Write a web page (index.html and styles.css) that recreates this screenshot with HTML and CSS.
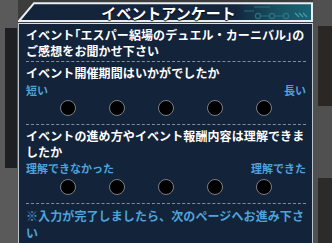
FILE: index.html
```html
<!DOCTYPE html>
<html lang="ja">
<head>
<meta charset="utf-8">
<title>イベントアンケート</title>
<link rel="stylesheet" href="styles.css">
</head>
<body>
<div class="stage">
  <div class="panel">
    <div class="header">
      <svg class="header-bg" width="295" height="20" viewBox="0 0 295 20">
        <defs>
          <linearGradient id="hg" x1="0" y1="0" x2="1" y2="0">
            <stop offset="0" stop-color="#13233a"/>
            <stop offset="0.74" stop-color="#13263d"/>
            <stop offset="0.88" stop-color="#18505f"/>
            <stop offset="1" stop-color="#1b6474"/>
          </linearGradient>
        </defs>
        <polygon points="1,19 16,1.2 294,1.2 294,19" fill="url(#hg)" stroke="#e8eef2" stroke-width="2"/>
        <g fill="none" stroke="#2f7f90" stroke-width="1.2" opacity="0.8">
          <circle cx="240" cy="14" r="2.6"/>
          <circle cx="254" cy="14" r="2.6"/>
          <circle cx="268" cy="14" r="2.6"/>
          <path d="M243 14 H251 M257 14 H265 M226 9 H236 M236 5 H252"/>
        </g>
        <g fill="none" stroke="#4aaabc" stroke-width="1.3" opacity="0.8">
          <path d="M277 11 L281 15 M281 11 L285 15 M285 11 L289 15"/>
        </g>
      </svg>
      <div class="title">イベントアンケート</div>
    </div>
    <div class="body">
      <div class="section intro">
        <p class="q">イベント<span class="kk">「</span>エスパー絽場のデュエル・カーニバル<span class="kk">」</span>の<br>ご感想をお聞かせ下さい</p>
      </div>
      <div class="section">
        <p class="q">イベント開催期間はいかがでしたか</p>
        <div class="labels"><span>短い</span><span>長い</span></div>
        <div class="radios">
          <span class="radio"></span><span class="radio"></span><span class="radio"></span><span class="radio"></span><span class="radio"></span>
        </div>
      </div>
      <div class="section">
        <p class="q">イベントの進め方やイベント報酬内容は理解できま<br>したか</p>
        <div class="labels tight"><span>理解できなかった</span><span>理解できた</span></div>
        <div class="radios">
          <span class="radio"></span><span class="radio"></span><span class="radio"></span><span class="radio"></span><span class="radio"></span>
        </div>
      </div>
      <div class="section note">
        <p class="q blue">※入力が完了しましたら、次のページへお進み下さ<br>い</p>
      </div>
    </div>
  </div>
</div>
</body>
</html>
```

FILE: styles.css
```css
html, body {
  margin: 0;
  padding: 0;
}
body {
  width: 332px;
  height: 243px;
  overflow: hidden;
  font-family: "Noto Sans CJK JP", "Noto Sans", sans-serif;
  background:
    linear-gradient(90deg, transparent 0 5px, #1d1f22 5px 17px, transparent 17px) 0 28px / 332px 140px no-repeat,
    linear-gradient(90deg, transparent 0 318px, #2a2725 318px 332px) 0 26px / 332px 80px no-repeat,
    linear-gradient(90deg, transparent 0 318px, #2c2b29 318px 332px) 0 178px / 332px 65px no-repeat,
    linear-gradient(90deg, #5a5a5a 0 18px, #3c3c3c 18px 313px, #505050 313px 332px);
}
.stage {
  padding: 2px 0 0 18px;
}
.panel {
  width: 295px;
  display: flex;
  flex-direction: column;
}
.header {
  position: relative;
  height: 20px;
  display: flex;
  align-items: center;
  justify-content: center;
  padding-left: 6px;
}
.header-bg {
  position: absolute;
  left: 0;
  top: 0;
}
.title {
  position: relative;
  color: #ffffff;
  font-size: 15px;
  font-weight: 700;
  letter-spacing: 0px;
  line-height: 20px;
  padding-top: 2px;
  white-space: nowrap;
  text-shadow: 0 1px 1px #000;
}
.body {
  height: 230px;
  background: #13233a;
  border: 1px solid #b9c3cc;
  border-bottom: none;
  border-top-color: #d8dee4;
  padding: 0 6px 0 7px;
  margin-top: 1px;
}
.section {
  border-top: 1px dashed #7f8d9e;
  padding: 3px 0 8px;
}
.section.intro {
  border-top: none;
  padding: 3px 0 2px;
}
.section.note {
  padding: 3px 0 0;
}
.q {
  margin: 0;
  color: #ffffff;
  font-size: 12px;
  font-weight: 700;
  line-height: 16px;
  letter-spacing: 0.1px;
  white-space: nowrap;
}
.q.blue {
  color: #4ea3dc;
  line-height: 17px;
}
.kk {
  font-feature-settings: "palt";
}
.labels {
  display: flex;
  justify-content: space-between;
  color: #4ea3dc;
  font-size: 11px;
  font-weight: 700;
  line-height: 14px;
  margin-top: 2px;
}
.labels.tight {
  margin-top: 1px;
}
.radios {
  display: flex;
  justify-content: center;
  gap: 33px;
  margin-top: 3px;
}
.labels.tight + .radios {
  margin-top: 4px;
}
.radio {
  width: 14px;
  height: 14px;
  border-radius: 50%;
  background: #000;
  border: 1px solid #7a7f86;
}
```
